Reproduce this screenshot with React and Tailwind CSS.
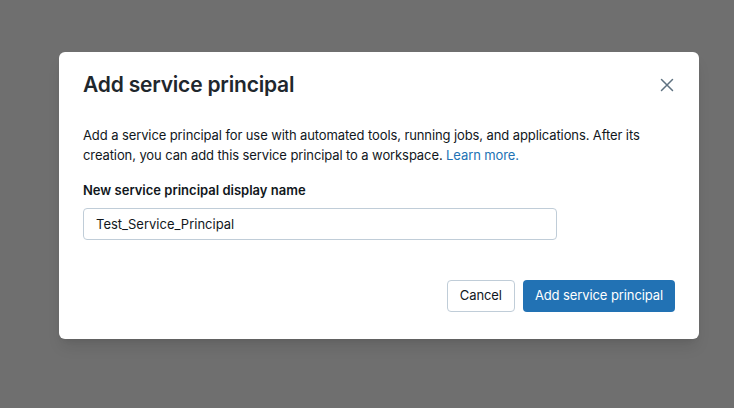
export default function App() {
  return (
    <div
      className="h-[408px] w-full bg-[#6f6f6f] pl-[59px] pt-[52px]"
      style={{ fontFamily: "Inter, 'Liberation Sans', sans-serif" }}
    >
      <div className="w-[640px] rounded-[6px] bg-white px-6 pt-[19px] pb-[27px] shadow-lg">
        <div className="flex items-center justify-between">
          <h2 className="text-[21px] leading-[28px] font-semibold tracking-[-0.2px] text-[#1f272d]">
            Add service principal
          </h2>
          <button className="mr-[1px] flex h-6 w-[14px] items-center justify-center text-[#5f7281]">
            <svg width="14" height="14" viewBox="0 0 14 14" fill="none" stroke="currentColor" strokeWidth="1.5" strokeLinecap="round">
              <path d="M1.5 1.5l11 11M12.5 1.5l-11 11" />
            </svg>
          </button>
        </div>

        <p className="mt-[26px] text-[13px] leading-[20px] tracking-[-0.1px] text-[#11171c]">
          Add a service principal for use with automated tools, running jobs, and applications. After its
          creation, you can add this service principal to a workspace.{" "}
          <a className="text-[#2272b4]">Learn more.</a>
        </p>

        <label className="mt-[15px] block text-[13px] leading-[20px] font-semibold text-[#11171c]">
          New service principal display name
        </label>
        <input
          className="mt-2 h-8 w-[474px] rounded-[4px] border border-[#c0cdd8] px-3 text-[13px] text-[#11171c] outline-none"
          defaultValue="Test_Service_Principal"
        />

        <div className="mt-10 flex justify-end gap-2">
          <button className="h-8 rounded-[4px] border border-[#c0cdd8] bg-white px-3 text-[13px] tracking-[-0.1px] text-[#11171c]">
            Cancel
          </button>
          <button className="h-8 rounded-[4px] bg-[#2272b4] px-3 text-[13px] tracking-[-0.1px] text-white">
            Add service principal
          </button>
        </div>
      </div>
    </div>
  );
}
